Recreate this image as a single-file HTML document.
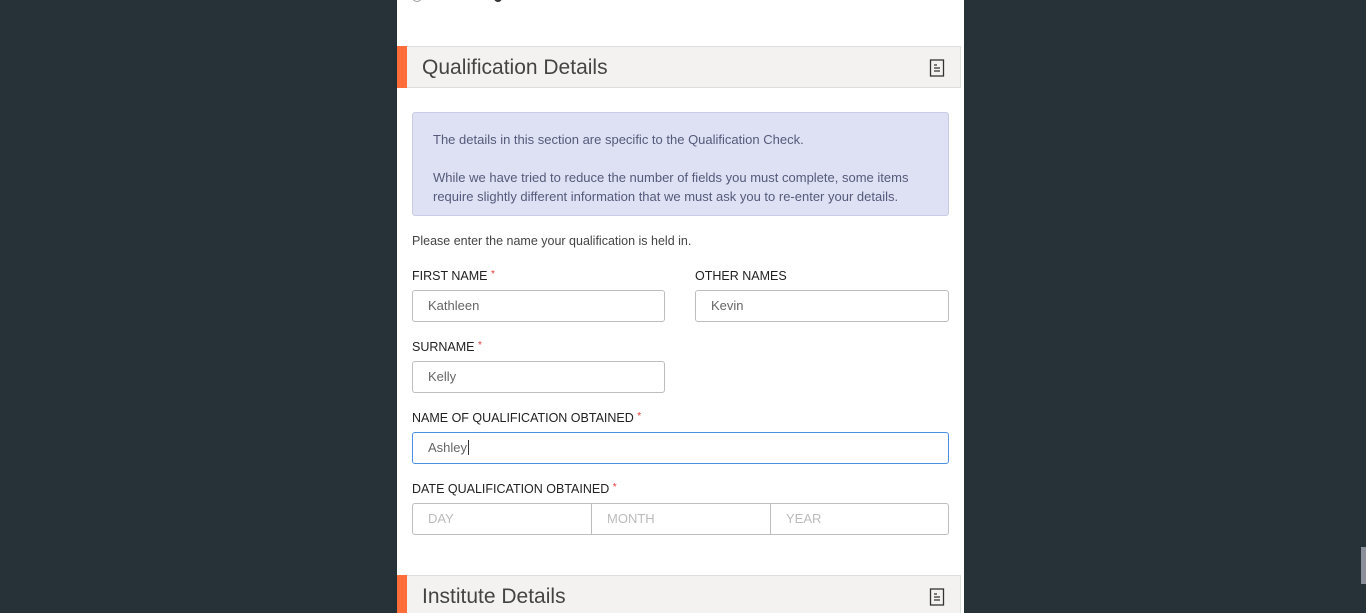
<!DOCTYPE html>
<html><head><meta charset="utf-8"><style>
*{box-sizing:border-box;margin:0;padding:0}
body{width:1366px;height:613px;overflow:hidden;background:#263238;font-family:"Liberation Sans",sans-serif;position:relative}
.panel{position:absolute;left:397px;top:0;width:567px;height:100%;background:#fff;overflow:hidden}
.hdr{position:absolute;left:0;width:564px;height:42px;background:#f3f2f1;border:1px solid #dedede;border-left:none}
.hdr .bar{position:absolute;left:0;top:-1px;width:10px;height:42px;background:#ff6d3a}
.hdr .t{position:absolute;left:25px;top:9px;font-size:21px;color:#444;font-weight:300}
.hdr svg{position:absolute;left:532px;top:12px}
.info{position:absolute;left:15px;top:112px;width:537px;height:104px;background:#dee1f3;border:1px solid #c9cce6;border-radius:3px;padding:17px 20px;font-size:13px;color:#555a7a;line-height:19px}
.lbl{position:absolute;font-size:12.5px;color:#222}
.lbl b{color:#e53935;font-weight:normal;font-size:10px;vertical-align:top}
.in{position:absolute;height:32px;border:1px solid #bdbdbd;border-radius:3px;font-size:13px;color:#666;padding:7px 15px}
.ph{color:#bbb}
</style></head><body>
<div class="panel">
<div style="position:absolute;left:15px;top:-8px;width:10px;height:10px;border:1px solid #999;border-radius:50%"></div>
<div style="position:absolute;left:97px;top:-6px;width:8px;height:8px;background:#333;border-radius:50%"></div>
<div class="hdr" style="top:46px"><div class="bar"></div><div class="t">Qualification Details</div>
<svg width="16" height="18" viewBox="0 0 16 18"><rect x="1.5" y="1" width="13" height="16" fill="none" stroke="#333" stroke-width="1.3"/><path d="M5 6h3M5 9h6M5 12h6" stroke="#333" stroke-width="1.3"/></svg></div>
<div class="info">The details in this section are specific to the Qualification Check.<br><br>While we have tried to reduce the number of fields you must complete, some items require slightly different information that we must ask you to re-enter your details.</div>
<div class="lbl" style="left:15px;top:234px;color:#444">Please enter the name your qualification is held in.</div>
<div class="lbl" style="left:15px;top:269px">FIRST NAME <b>*</b></div>
<div class="in" style="left:15px;top:290px;width:253px">Kathleen</div>
<div class="lbl" style="left:298px;top:269px">OTHER NAMES</div>
<div class="in" style="left:298px;top:290px;width:254px">Kevin</div>
<div class="lbl" style="left:15px;top:340px">SURNAME <b>*</b></div>
<div class="in" style="left:15px;top:361px;width:253px">Kelly</div>
<div class="lbl" style="left:15px;top:411px">NAME OF QUALIFICATION OBTAINED <b>*</b></div>
<div class="in" style="left:15px;top:432px;width:537px;border-color:#4a90e2">Ashley<span style="border-left:1px solid #333;margin-left:1px"></span></div>
<div class="lbl" style="left:15px;top:482px">DATE QUALIFICATION OBTAINED <b>*</b></div>
<div class="in ph" style="left:15px;top:503px;width:180px;border-radius:3px 0 0 3px">DAY</div>
<div class="in ph" style="left:194px;top:503px;width:180px;border-radius:0">MONTH</div>
<div class="in ph" style="left:373px;top:503px;width:179px;border-radius:0 3px 3px 0">YEAR</div>
<div class="hdr" style="top:575px"><div class="bar"></div><div class="t">Institute Details</div>
<svg width="16" height="18" viewBox="0 0 16 18"><rect x="1.5" y="1" width="13" height="16" fill="none" stroke="#333" stroke-width="1.3"/><path d="M5 6h3M5 9h6M5 12h6" stroke="#333" stroke-width="1.3"/></svg></div>
</div>
<div style="position:absolute;left:1361px;top:547px;width:5px;height:37px;background:#8a8f99"></div>
</body></html>
